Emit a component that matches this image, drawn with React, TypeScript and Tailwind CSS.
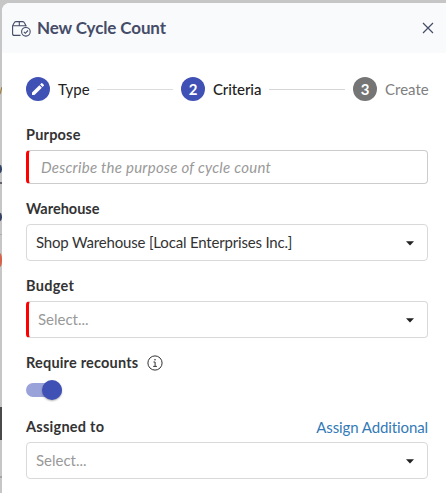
import React from "react";

function Caret() {
  return (
    <svg width="8" height="5" viewBox="0 0 8 5" className="mt-px mr-[13px] shrink-0">
      <path d="M0 .2h8L4 4.6z" fill="#222" />
    </svg>
  );
}

function Label({ children, className = "" }: { children: React.ReactNode; className?: string }) {
  return <span className={`whitespace-nowrap text-[14.5px] leading-5 font-bold text-[#333] ${className}`}>{children}</span>;
}

function Select({ value, placeholder = false, required = false }: { value: string; placeholder?: boolean; required?: boolean }) {
  return (
    <div
      className={`flex h-[37px] w-[402px] items-center justify-between rounded-[4px] border border-[#d9d9d9] bg-white pl-[9px] text-[15px] ${
        required ? "border-l-[3px] border-l-[#f00]" : ""
      }`}
    >
      <span className={`whitespace-nowrap ${placeholder ? "tracking-[-0.02px] text-[#999]" : "tracking-[-0.18px] text-[#333]"}`}>{value}</span>
      <Caret />
    </div>
  );
}

function Step({ icon, label, active, className }: { icon: React.ReactNode; label: string; active: boolean; className: string }) {
  return (
    <div className="flex shrink-0 items-center gap-2">
      <span className={`flex h-6 w-6 items-center justify-center rounded-full text-[15px] font-bold text-white ${active ? "bg-[#3f51b5]" : "bg-[#757575]"}`}>
        {icon}
      </span>
      <span className={`whitespace-nowrap text-[15px] leading-5 ${className}`}>{label}</span>
    </div>
  );
}

function Backdrop() {
  return (
    <div className="absolute inset-y-0 left-0 w-2 overflow-hidden">
      <svg width="2" height="10" viewBox="0 0 2 10" className="absolute top-[87px] left-0">
        <path d="M2 0 0 7" stroke="#a18446" strokeWidth="1.3" />
      </svg>
      <span className="absolute top-[164px] -left-[7px] h-[10px] w-[9px] rounded-full bg-[#344467]" />
      <span className="absolute top-[182px] left-0 h-[2px] w-2 bg-[#64616b]" />
      <span className="absolute top-[212px] -left-[7px] h-[10px] w-[9px] rounded-full bg-[#354263]" />
      <span className="absolute top-[234px] left-0 h-px w-2 bg-[#adadad]" />
      <span className="absolute top-[250px] -left-[14px] h-[20px] w-[16px] rounded-full bg-[#d86149]" />
      <span className="absolute top-[407px] left-0 h-[33px] w-2 bg-[#4a4a4a]" />
      <span className="absolute top-[476px] left-0 h-[2px] w-2 bg-[#a5a5a5]" />
    </div>
  );
}

export default function App() {
  return (
    <div className="relative h-[493px] w-[446px] overflow-hidden bg-[#c6c6c6] pt-[3px] pl-[2px] font-[Lato,sans-serif]">
      <Backdrop />
      <div className="relative h-[490px] w-[450px] rounded-tl-[8px] bg-white">
        <header className="flex h-[50px] items-center rounded-tl-[8px] bg-[#f8fafc] pl-[10px] text-[#454c68]">
          <svg width="19" height="16" viewBox="0 0 19 16" fill="none" stroke="currentColor" strokeWidth="1.1" className="mt-[2px] shrink-0">
            <path d="M8.5 14.4H2.2Q.6 14.4.6 12.8V4.8L2.2 1.8Q2.7.6 3.8.6h7q1.1 0 1.6 1.2L14 4.8M.6 4.8H14V5.6M7.3.6v4.2" />
            <circle cx="13.9" cy="10.8" r="4.3" />
            <path d="m11.9 10.9 1.4 1.4 2.7-2.8" />
          </svg>
          <h1 className="ml-[6px] whitespace-nowrap text-[17px] leading-6 font-bold tracking-[-0.12px]">New Cycle Count</h1>
          <svg width="12" height="12" viewBox="0 0 12 12" stroke="currentColor" strokeWidth="1.2" className="mr-[16px] ml-auto shrink-0 -translate-x-[2px]">
            <path d="m1 1 10 10M11 1 1 11" />
          </svg>
        </header>
        <main className="flex w-[426px] flex-col pl-6">
          <div className="mt-6 flex h-6 w-[402px] items-center">
            <Step
              active
              label="Type"
              className="w-[31px] text-[#222]"
              icon={
                <svg width="16" height="16" viewBox="0 0 24 24" fill="white">
                  <path d="M3 17.25V21h3.75L17.81 9.94l-3.75-3.75zM20.71 7.04a1 1 0 0 0 0-1.41l-2.34-2.34a1 1 0 0 0-1.41 0l-1.83 1.83 3.75 3.75z" />
                </svg>
              }
            />
            <span className="mx-2 h-px flex-1 bg-[#dcdcdc]" />
            <Step active label="Criteria" className="w-[48px] font-medium tracking-[-0.1px] text-[#222]" icon="2" />
            <span className="mx-2 h-px flex-1 bg-[#d5d5d5]" />
            <Step active={false} label="Create" className="w-[43px] text-[#808080]" icon="3" />
          </div>

          <Label className="mt-6 tracking-[0.2px]">Purpose</Label>
          <input
            className="mt-[5px] h-[34px] w-[402px] rounded-[4px] border border-l-[3px] border-[#ccc] border-l-[#f00] bg-white pl-[12px] text-[15px] tracking-[0.26px] italic outline-none placeholder:text-[#999]"
            placeholder="Describe the purpose of cycle count"
          />

          <Label className="mt-[15px]">Warehouse</Label>
          <div className="mt-[5px]">
            <Select value="Shop Warehouse [Local Enterprises Inc.]" />
          </div>

          <Label className="mt-[15px] tracking-[0.3px]">Budget</Label>
          <div className="mt-[5px]">
            <Select value="Select..." placeholder required />
          </div>

          <div className="mt-[15px] flex h-5 items-center">
            <Label className="tracking-[0.19px]">Require recounts</Label>
            <svg width="16" height="16" viewBox="0 0 16 16" fill="none" stroke="#333" strokeWidth="1" className="ml-[9px] -mt-px">
              <circle cx="8" cy="8" r="7.1" />
              <path d="M6.5 7h1.6v4.3M6.2 11.4h3.7" />
              <circle cx="8" cy="4.7" r=".8" fill="#333" stroke="none" />
            </svg>
          </div>
          <div className="mt-[7px] flex h-5 items-center">
            <span className="flex h-[14px] w-[36px] items-center justify-end rounded-full bg-[#9aa3d9]">
              <span className="h-5 w-5 shrink-0 rounded-full bg-[#3f51b5] shadow-[0_1px_2px_rgba(0,0,0,0.3)]" />
            </span>
          </div>

          <div className="mt-[17px] flex h-5 w-[402px] items-center justify-between">
            <Label className="tracking-[0.25px]">Assigned to</Label>
            <span className="whitespace-nowrap text-[15px] leading-5 tracking-[-0.1px] text-[#337ab7]">Assign Additional</span>
          </div>
          <div className="mt-[5px]">
            <Select value="Select..." placeholder />
          </div>
        </main>
      </div>
    </div>
  );
}
